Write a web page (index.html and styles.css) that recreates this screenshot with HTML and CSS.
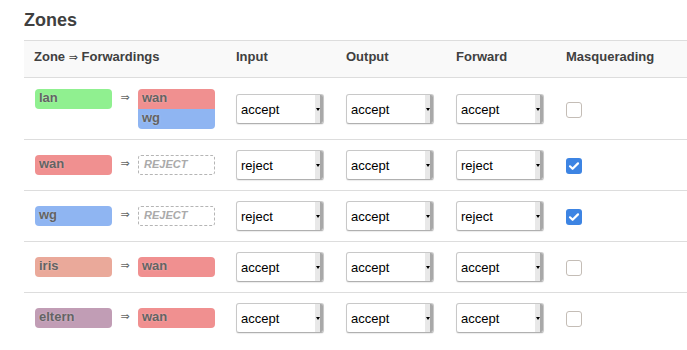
FILE: index.html
```html
<!DOCTYPE html>
<html lang="en">
<head>
  <meta charset="UTF-8" />
  <meta name="viewport" content="width=device-width, initial-scale=1.0"/>
  <title>Firewall - Zones</title>
  <link rel="stylesheet" href="styles.css">
</head>
<body>
  <div class="page">
    <h2 class="title">Zones</h2>
    <table class="zones">
      <colgroup>
        <col class="col-zone"><col class="col-pol"><col class="col-pol"><col class="col-pol"><col>
      </colgroup>
      <thead>
        <tr>
          <th>Zone <span class="th-arrow">⇒</span> Forwardings</th>
          <th>Input</th>
          <th>Output</th>
          <th>Forward</th>
          <th>Masquerading</th>
        </tr>
      </thead>
      <tbody>
        <tr>
          <td>
            <div class="fwd">
              <span class="badge lan">lan</span>
              <span class="arrow">⇒</span>
              <div class="dest">
                <span class="badge wan">wan</span>
                <span class="badge wg">wg</span>
              </div>
            </div>
          </td>
          <td><span class="sel"><select><option>accept</option></select></span></td>
          <td><span class="sel"><select><option>accept</option></select></span></td>
          <td><span class="sel"><select><option>accept</option></select></span></td>
          <td><span class="cb"></span></td>
        </tr>
        <tr>
          <td>
            <div class="fwd">
              <span class="badge wan">wan</span>
              <span class="arrow">⇒</span>
              <div class="dest"><span class="badge reject">REJECT</span></div>
            </div>
          </td>
          <td><span class="sel"><select><option>reject</option></select></span></td>
          <td><span class="sel"><select><option>accept</option></select></span></td>
          <td><span class="sel"><select><option>reject</option></select></span></td>
          <td><span class="cb checked"><svg viewBox="0 0 16 16" width="16" height="16"><path d="M4 8.3l2.6 2.5L12 5.4" fill="none" stroke="#fff" stroke-width="2.2" stroke-linecap="round" stroke-linejoin="round"/></svg></span></td>
        </tr>
        <tr>
          <td>
            <div class="fwd">
              <span class="badge wg">wg</span>
              <span class="arrow">⇒</span>
              <div class="dest"><span class="badge reject">REJECT</span></div>
            </div>
          </td>
          <td><span class="sel"><select><option>reject</option></select></span></td>
          <td><span class="sel"><select><option>accept</option></select></span></td>
          <td><span class="sel"><select><option>reject</option></select></span></td>
          <td><span class="cb checked"><svg viewBox="0 0 16 16" width="16" height="16"><path d="M4 8.3l2.6 2.5L12 5.4" fill="none" stroke="#fff" stroke-width="2.2" stroke-linecap="round" stroke-linejoin="round"/></svg></span></td>
        </tr>
        <tr>
          <td>
            <div class="fwd">
              <span class="badge iris">iris</span>
              <span class="arrow">⇒</span>
              <div class="dest"><span class="badge wan">wan</span></div>
            </div>
          </td>
          <td><span class="sel"><select><option>accept</option></select></span></td>
          <td><span class="sel"><select><option>accept</option></select></span></td>
          <td><span class="sel"><select><option>accept</option></select></span></td>
          <td><span class="cb"></span></td>
        </tr>
        <tr>
          <td>
            <div class="fwd">
              <span class="badge eltern">eltern</span>
              <span class="arrow">⇒</span>
              <div class="dest"><span class="badge wan">wan</span></div>
            </div>
          </td>
          <td><span class="sel"><select><option>accept</option></select></span></td>
          <td><span class="sel"><select><option>accept</option></select></span></td>
          <td><span class="sel"><select><option>accept</option></select></span></td>
          <td><span class="cb"></span></td>
        </tr>
      </tbody>
    </table>
  </div>
</body>
</html>
```

FILE: styles.css
```css
* { margin:0; padding:0; box-sizing:border-box; }
body { font-family:'Liberation Sans',Arial,sans-serif; font-size:13px; color:#404040; background:#fff; overflow:hidden; }
.page { padding:10px 0 0 24px; }
.title { font-size:18px; line-height:20px; font-weight:bold; color:#404040; margin-bottom:10px; }

.zones { width:663px; border-collapse:collapse; table-layout:fixed; border-top:1px solid #ddd; }
.col-zone { width:202px; }
.col-pol { width:110px; }
.zones th { height:37px; text-align:left; font-weight:bold; line-height:20px; padding:6px 10px 10px; background:#f9f9f9; border-bottom:1px solid #ddd; white-space:nowrap; }
.th-arrow { font-weight:normal; font-family:'DejaVu Sans',sans-serif; font-size:11px; line-height:1; }
.zones td { padding:10px; vertical-align:middle; border-bottom:1px solid #ddd; }
.zones tbody tr:first-child td { padding-top:11px; }
.zones tbody tr:last-child td { border-bottom:none; }

.fwd { display:flex; align-items:flex-start; margin-left:1px; }
.dest { display:flex; flex-direction:column; }
.arrow { width:26px; text-align:center; font-family:'DejaVu Sans',sans-serif; font-size:11px; line-height:18px; color:#666; }
.badge { display:block; width:77px; height:20px; padding:0 4px 2px; line-height:18px; font-weight:bold; border-radius:4px; color:#636363; text-shadow:0 0 2px rgba(255,255,255,0.4); }
.dest .badge:first-child:not(:last-child) { border-radius:4px 4px 0 0; }
.dest .badge:last-child:not(:first-child) { border-radius:0 0 4px 4px; }
.lan { background:#90f090; }
.wan { background:#f09090; }
.wg { background:#8fb5f2; }
.iris { background:#eaa99a; }
.eltern { background:#c19db5; }
.reject { background:transparent; border:1px dashed #b5b5b5; border-radius:3px; line-height:17px; padding-left:5px; font-size:11px; font-style:italic; color:#aaa; text-shadow:none; }

.sel { display:block; position:relative; width:88px; }
.sel select { appearance:none; -webkit-appearance:none; display:block; width:88px; height:30px; padding:0 12px 0 4px; font-family:'Liberation Sans',Arial,sans-serif; font-size:13px; color:#000; background:#fff; border:1px solid #c8c8c8; border-bottom-color:#b0b0b0; border-radius:3px; box-shadow:0 1px 1px rgba(0,0,0,0.08); outline:none; }
.sel::after { content:""; position:absolute; top:1px; right:1px; bottom:1px; width:8px; background:linear-gradient(to right,#e8e8e8 5px,#a8a8a8 5px); border-radius:0 2px 2px 0; }
.sel::before { content:""; position:absolute; z-index:1; right:4px; top:14px; border-left:2px solid transparent; border-right:2px solid transparent; border-top:3px solid #000; }

.cb { display:block; width:16px; height:16px; margin-top:2px; border:1px solid #c4bdb6; border-radius:3px; background:#fff; }
.cb.checked { border:none; background:#3d84e3; }
.cb svg { display:block; }
```
